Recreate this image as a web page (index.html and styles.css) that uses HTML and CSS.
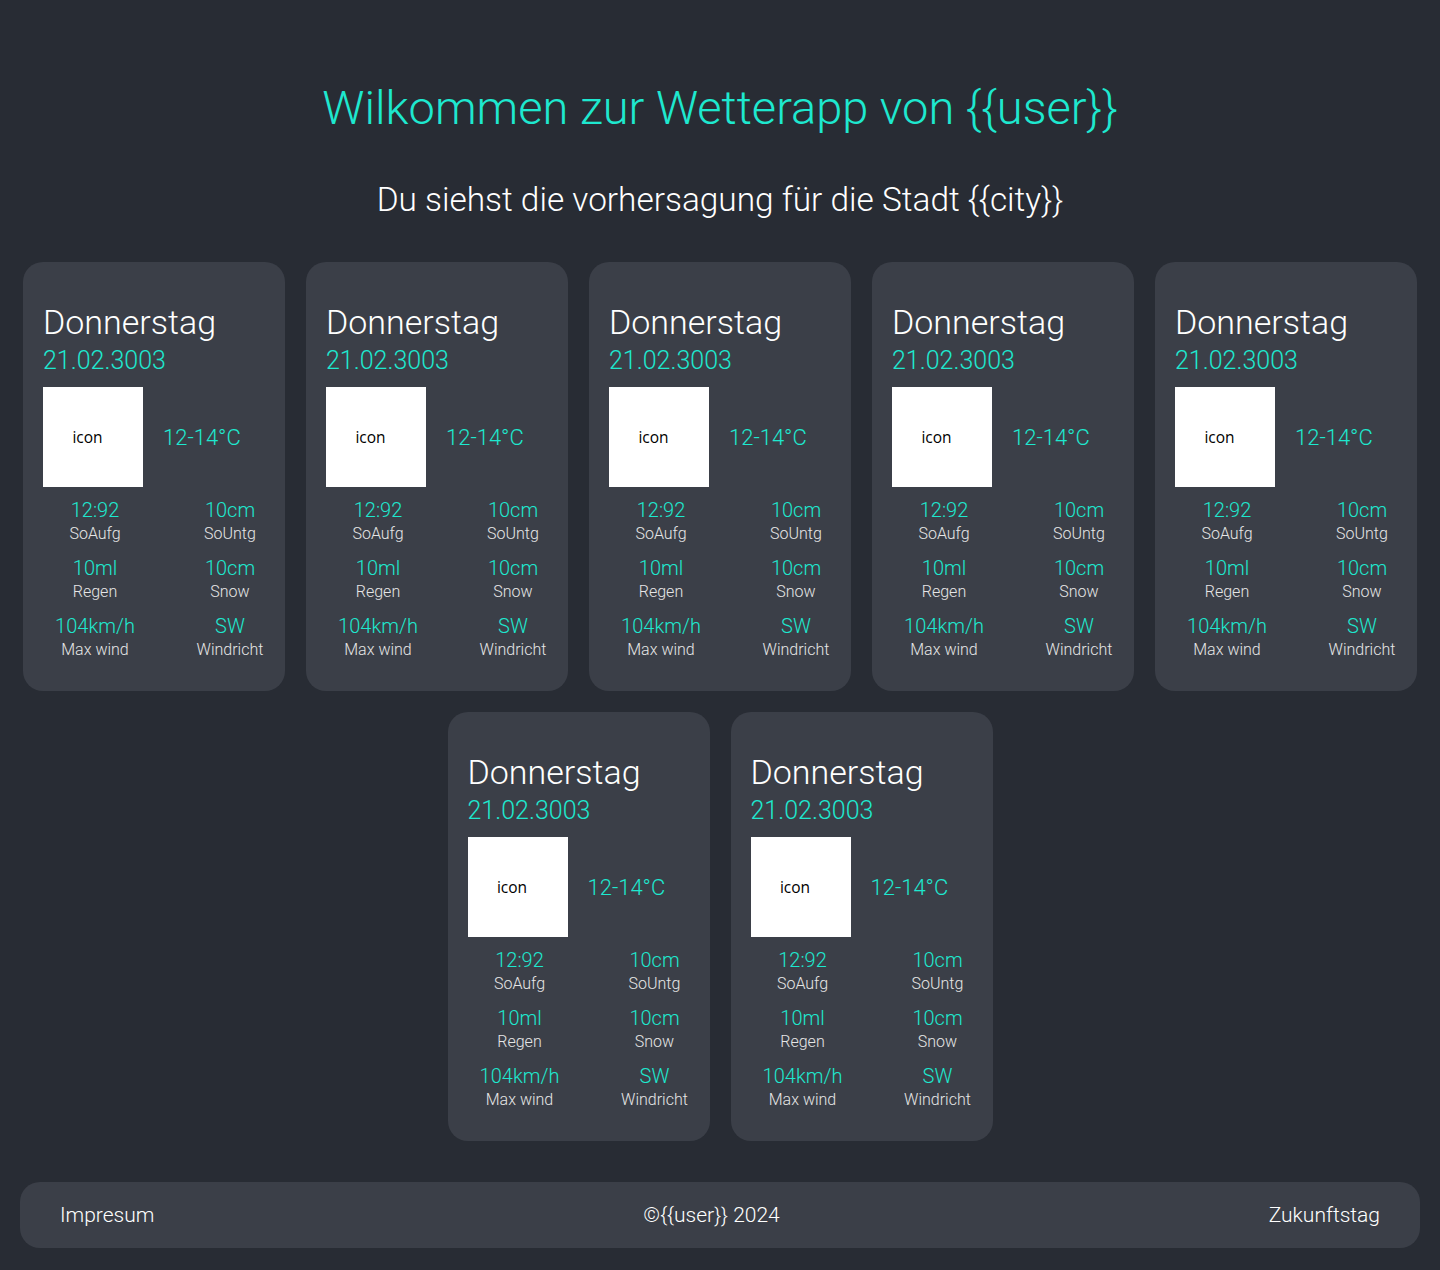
FILE: index.html
```html
<!DOCTYPE html>
<html lang="de">
<head>
<meta charset="utf-8">
<title>Wetterapp</title>
<link rel="stylesheet" href="styles.css">
</head>
<body>
<header class="head">
  <h1 class="title">Wilkommen zur Wetterapp von {{user}}</h1>
  <h2 class="subtitle">Du siehst die vorhersagung für die Stadt {{city}}</h2>
</header>
<main class="cards">
  <section class="card">
    <h3 class="day">Donnerstag</h3>
    <div class="date">21.02.3003</div>
    <div class="main-row"><div class="icon">icon</div><div class="temp">12-14°C</div></div>
    <div class="stats">
      <div class="stat"><span class="val">12:92</span><span class="lbl">SoAufg</span></div>
      <div class="stat"><span class="val">10cm</span><span class="lbl">SoUntg</span></div>
      <div class="stat"><span class="val">10ml</span><span class="lbl">Regen</span></div>
      <div class="stat"><span class="val">10cm</span><span class="lbl">Snow</span></div>
      <div class="stat"><span class="val">104km/h</span><span class="lbl">Max wind</span></div>
      <div class="stat"><span class="val">SW</span><span class="lbl">Windricht</span></div>
    </div>
  </section>
  <section class="card">
    <h3 class="day">Donnerstag</h3>
    <div class="date">21.02.3003</div>
    <div class="main-row"><div class="icon">icon</div><div class="temp">12-14°C</div></div>
    <div class="stats">
      <div class="stat"><span class="val">12:92</span><span class="lbl">SoAufg</span></div>
      <div class="stat"><span class="val">10cm</span><span class="lbl">SoUntg</span></div>
      <div class="stat"><span class="val">10ml</span><span class="lbl">Regen</span></div>
      <div class="stat"><span class="val">10cm</span><span class="lbl">Snow</span></div>
      <div class="stat"><span class="val">104km/h</span><span class="lbl">Max wind</span></div>
      <div class="stat"><span class="val">SW</span><span class="lbl">Windricht</span></div>
    </div>
  </section>
  <section class="card">
    <h3 class="day">Donnerstag</h3>
    <div class="date">21.02.3003</div>
    <div class="main-row"><div class="icon">icon</div><div class="temp">12-14°C</div></div>
    <div class="stats">
      <div class="stat"><span class="val">12:92</span><span class="lbl">SoAufg</span></div>
      <div class="stat"><span class="val">10cm</span><span class="lbl">SoUntg</span></div>
      <div class="stat"><span class="val">10ml</span><span class="lbl">Regen</span></div>
      <div class="stat"><span class="val">10cm</span><span class="lbl">Snow</span></div>
      <div class="stat"><span class="val">104km/h</span><span class="lbl">Max wind</span></div>
      <div class="stat"><span class="val">SW</span><span class="lbl">Windricht</span></div>
    </div>
  </section>
  <section class="card">
    <h3 class="day">Donnerstag</h3>
    <div class="date">21.02.3003</div>
    <div class="main-row"><div class="icon">icon</div><div class="temp">12-14°C</div></div>
    <div class="stats">
      <div class="stat"><span class="val">12:92</span><span class="lbl">SoAufg</span></div>
      <div class="stat"><span class="val">10cm</span><span class="lbl">SoUntg</span></div>
      <div class="stat"><span class="val">10ml</span><span class="lbl">Regen</span></div>
      <div class="stat"><span class="val">10cm</span><span class="lbl">Snow</span></div>
      <div class="stat"><span class="val">104km/h</span><span class="lbl">Max wind</span></div>
      <div class="stat"><span class="val">SW</span><span class="lbl">Windricht</span></div>
    </div>
  </section>
  <section class="card">
    <h3 class="day">Donnerstag</h3>
    <div class="date">21.02.3003</div>
    <div class="main-row"><div class="icon">icon</div><div class="temp">12-14°C</div></div>
    <div class="stats">
      <div class="stat"><span class="val">12:92</span><span class="lbl">SoAufg</span></div>
      <div class="stat"><span class="val">10cm</span><span class="lbl">SoUntg</span></div>
      <div class="stat"><span class="val">10ml</span><span class="lbl">Regen</span></div>
      <div class="stat"><span class="val">10cm</span><span class="lbl">Snow</span></div>
      <div class="stat"><span class="val">104km/h</span><span class="lbl">Max wind</span></div>
      <div class="stat"><span class="val">SW</span><span class="lbl">Windricht</span></div>
    </div>
  </section>
  <section class="card">
    <h3 class="day">Donnerstag</h3>
    <div class="date">21.02.3003</div>
    <div class="main-row"><div class="icon">icon</div><div class="temp">12-14°C</div></div>
    <div class="stats">
      <div class="stat"><span class="val">12:92</span><span class="lbl">SoAufg</span></div>
      <div class="stat"><span class="val">10cm</span><span class="lbl">SoUntg</span></div>
      <div class="stat"><span class="val">10ml</span><span class="lbl">Regen</span></div>
      <div class="stat"><span class="val">10cm</span><span class="lbl">Snow</span></div>
      <div class="stat"><span class="val">104km/h</span><span class="lbl">Max wind</span></div>
      <div class="stat"><span class="val">SW</span><span class="lbl">Windricht</span></div>
    </div>
  </section>
  <section class="card">
    <h3 class="day">Donnerstag</h3>
    <div class="date">21.02.3003</div>
    <div class="main-row"><div class="icon">icon</div><div class="temp">12-14°C</div></div>
    <div class="stats">
      <div class="stat"><span class="val">12:92</span><span class="lbl">SoAufg</span></div>
      <div class="stat"><span class="val">10cm</span><span class="lbl">SoUntg</span></div>
      <div class="stat"><span class="val">10ml</span><span class="lbl">Regen</span></div>
      <div class="stat"><span class="val">10cm</span><span class="lbl">Snow</span></div>
      <div class="stat"><span class="val">104km/h</span><span class="lbl">Max wind</span></div>
      <div class="stat"><span class="val">SW</span><span class="lbl">Windricht</span></div>
    </div>
  </section>
</main>
<footer class="footer">
  <span>Impresum</span>
  <span>©{{user}} 2024</span>
  <span>Zukunftstag</span>
</footer>
</body>
</html>
```
FILE: styles.css
```css
* { box-sizing: border-box; }
html, body { margin: 0; padding: 0; }
body {
  background: #282c34;
  font-family: Roboto, "Noto Sans", sans-serif;
  font-weight: 300;
  color: #ffffff;
  padding: 0 20px 21px;
}
.head { text-align: center; padding-top: 80px; }
.title {
  margin: 0;
  font-size: 47px;
  line-height: 56px;
  font-weight: 300;
  color: #1ee8cf;
}
.subtitle {
  margin: 44px 0 0;
  font-size: 33.4px;
  line-height: 40px;
  font-weight: 300;
  color: #ffffff;
}
.cards {
  margin-top: 42px;
  display: flex;
  flex-wrap: wrap;
  justify-content: center;
  gap: 21px;
}
.card {
  width: 262px;
  background: #3b3f48;
  border-radius: 20px;
  padding: 40px 20px 29px;
}
.day {
  margin: 0;
  font-size: 34px;
  line-height: 40px;
  font-weight: 300;
  color: #ffffff;
}
.date {
  margin-top: 4px;
  font-size: 25px;
  line-height: 30px;
  color: #1ee8cf;
}
.main-row {
  margin-top: 11px;
  display: flex;
  align-items: center;
  gap: 20px;
}
.icon {
  width: 100px;
  height: 100px;
  background: #ffffff;
  color: #000000;
  font-family: "Open Sans", sans-serif;
  font-weight: 400;
  font-size: 15.5px;
  padding-right: 11px;
  display: flex;
  align-items: center;
  justify-content: center;
}
.temp {
  font-size: 22px;
  color: #1ee8cf;
}
.stats {
  margin-top: 11px;
  display: grid;
  grid-template-columns: 104px 104px;
  column-gap: 31px;
  row-gap: 10px;
}
.stat {
  display: flex;
  flex-direction: column;
  align-items: center;
}
.val {
  font-size: 20px;
  line-height: 24px;
  color: #1ee8cf;
}
.lbl {
  font-size: 16px;
  line-height: 24px;
  color: #e6e6e6;
}
.footer {
  margin-top: 41px;
  height: 66px;
  background: #3b3f48;
  border-radius: 20px;
  padding: 0 40px;
  display: flex;
  justify-content: space-between;
  align-items: center;
  font-size: 21px;
  color: #ffffff;
}
```
